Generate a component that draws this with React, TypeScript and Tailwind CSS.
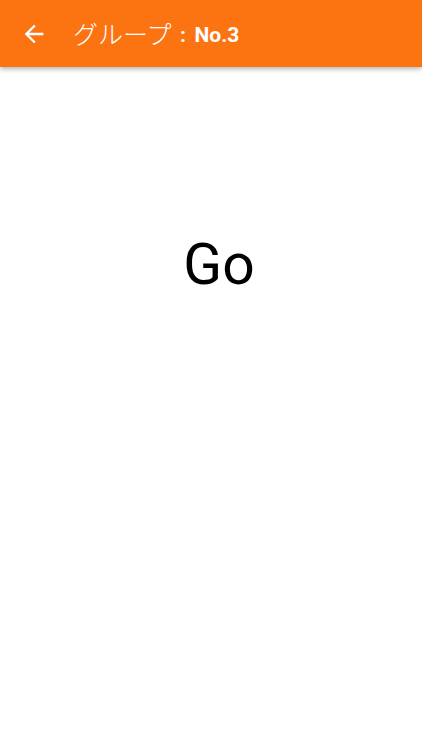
import React from "react";

export default function App() {
  return (
    <div className="w-[422px] h-[750px] bg-white flex flex-col" style={{ fontFamily: "Roboto, 'Noto Sans CJK JP', sans-serif" }}>
      <div className="h-[67px] bg-[#fc7312] flex items-center shadow-[0_2px_5px_rgba(0,0,0,0.3)] relative z-10">
        <svg width="28" height="28" viewBox="0 0 24 24" className="ml-[20px] mt-[1px]" fill="#ffffff">
          <path d="M20 11H7.83l5.59-5.59L12 4l-8 8 8 8 1.41-1.41L7.83 13H20v-2z" />
        </svg>
        <div className="ml-[25px] text-white leading-none mt-[3px] flex items-center">
          <span className="font-light text-[25px]">グループ</span>
          <span className="font-bold text-[21px] w-[23px] text-center" style={{ fontFamily: "Roboto, sans-serif" }}>:</span>
          <span className="font-bold text-[21px]">No.3</span>
        </div>
      </div>
      <div className="flex justify-center pt-[169px] pl-[16px]">
        <span className="text-[57px] leading-none text-black">Go</span>
      </div>
    </div>
  );
}
